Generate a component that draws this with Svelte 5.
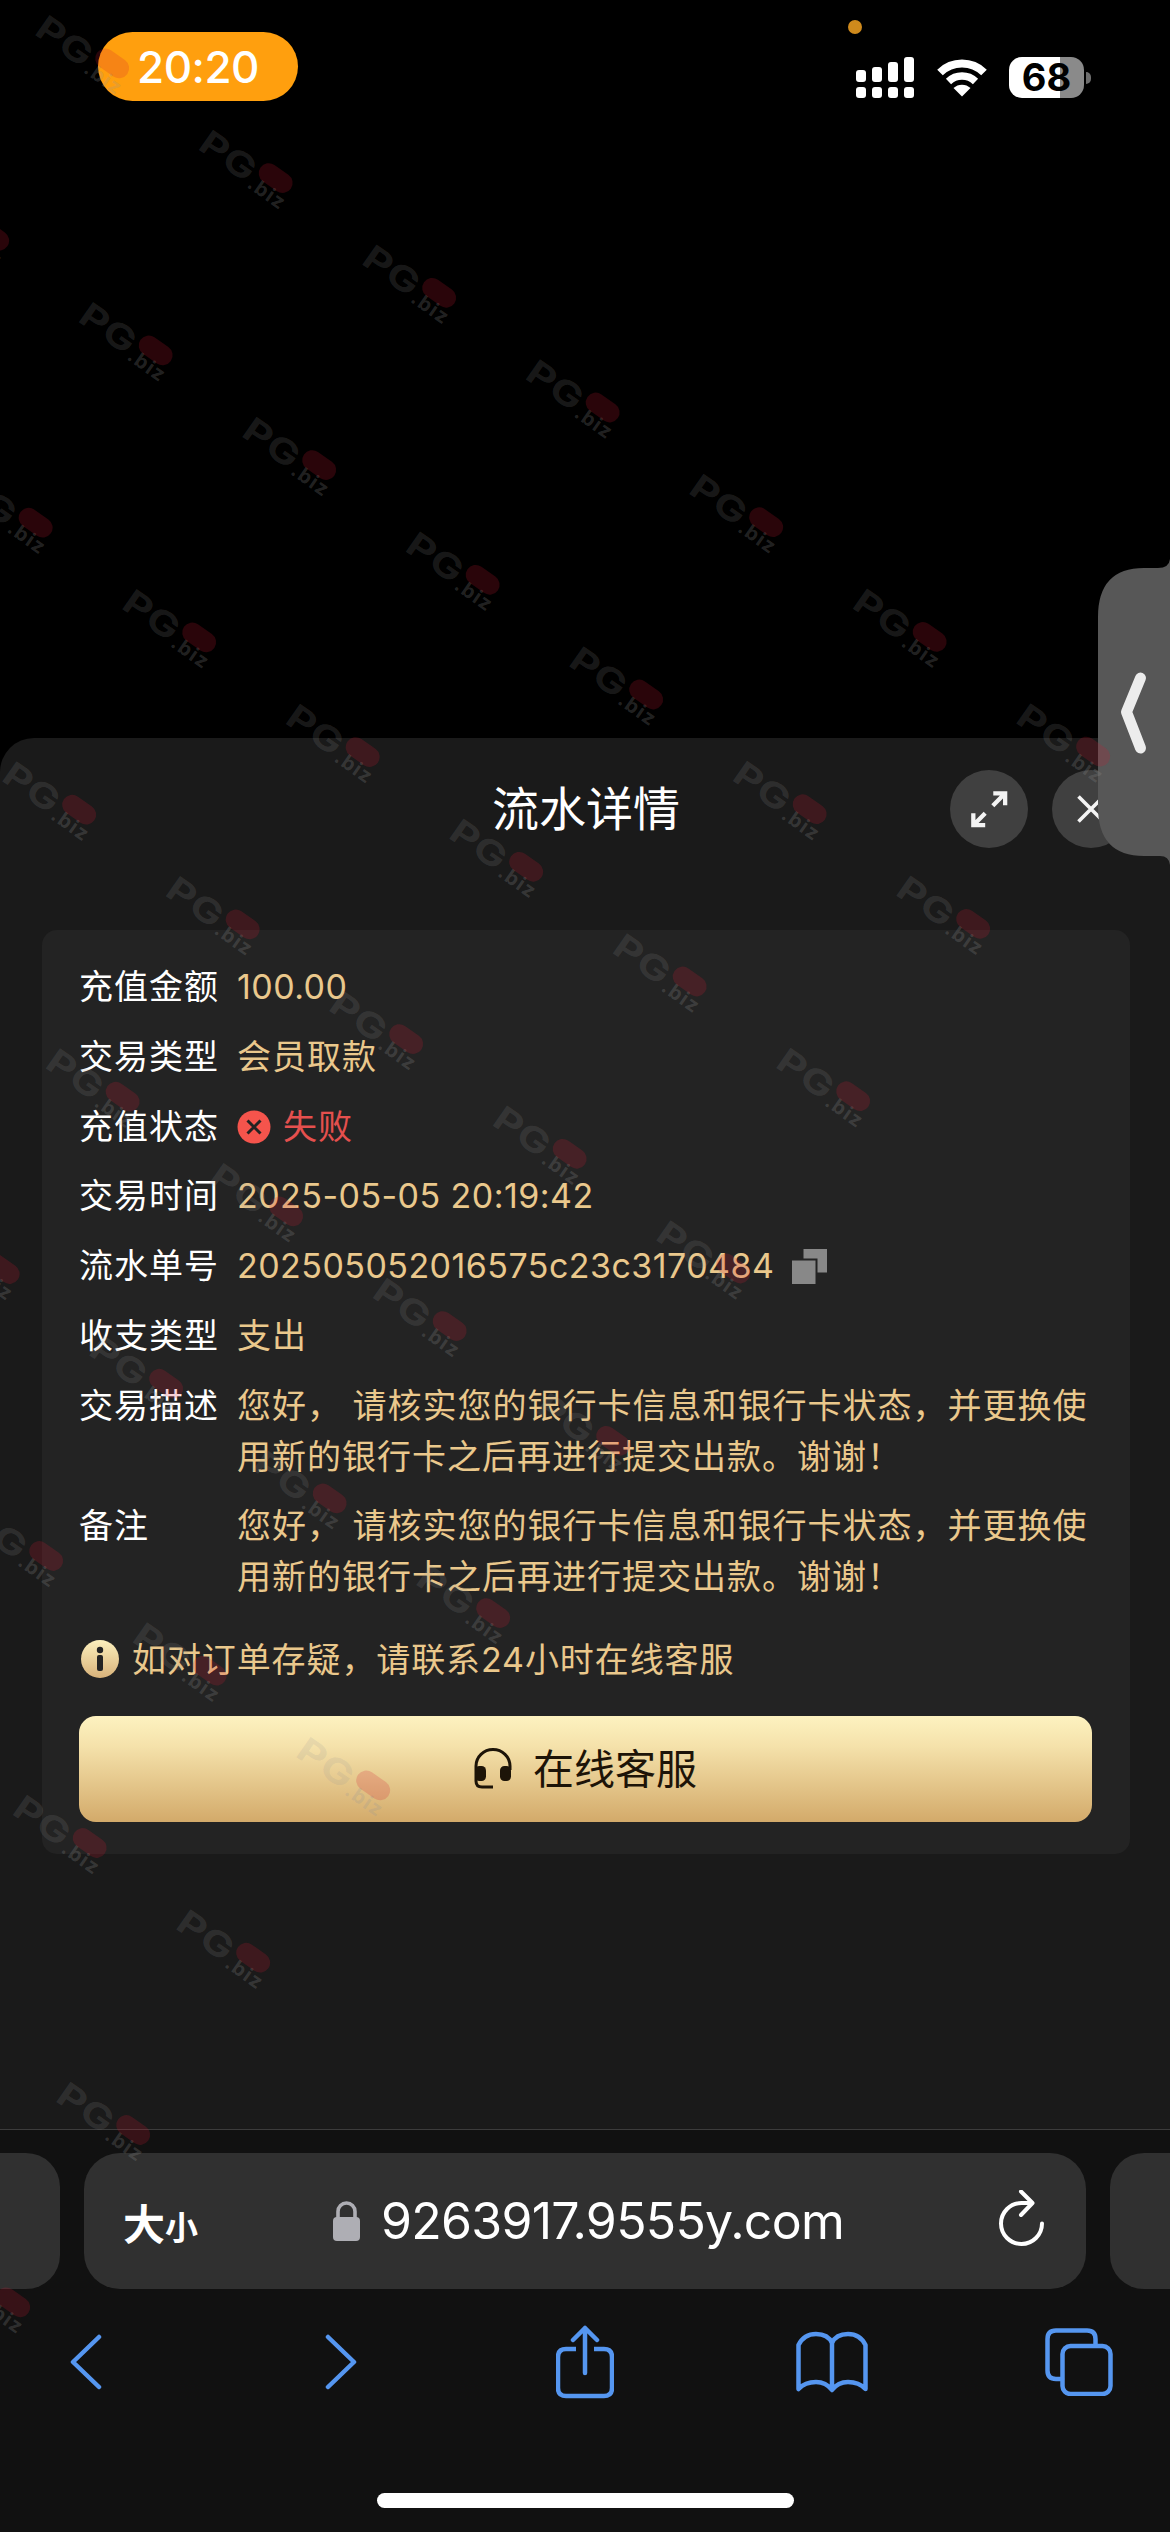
<script lang="ts">
  type Row = { label: string; value: string; kind?: string };

  const notice = '您好， 请核实您的银行卡信息和银行卡状态，并更换使用新的银行卡之后再进行提交出款。谢谢！';

  const rows: Array<Row> = [
    { label: '充值金额', value: '100.00', kind: 'number' },
    { label: '交易类型', value: '会员取款' },
    { label: '充值状态', value: '失败', kind: 'failed' },
    { label: '交易时间', value: '2025-05-05 20:19:42', kind: 'number' },
    { label: '流水单号', value: '202505052016575c23c3170484', kind: 'copy' },
    { label: '收支类型', value: '支出' },
    { label: '交易描述', value: notice },
    { label: '备注', value: notice },
  ];

  // first and last mark of every diagonal row
  const spans = [[0, 6], [-1, 5], [-1, 4], [-1, 3], [-1, 2], [-2, 1], [-2, 0], [-2, -1], [-2, -2], [-3, -3]];
  const marks: Array<{ x: number; y: number }> = [];
  spans.forEach(([from, to], i) => {
    for (let k = from; k <= to; k++) {
      marks.push({ x: 35 + i * 43.5 + k * 163.5, y: 15 + i * 287 + k * 114.7 });
    }
  });
</script>

<main class="phone">
  <header class="status-bar">
    <span class="time">20:20</span>
    <span class="mic-dot"></span>
    <div class="status-icons">
      <svg class="signal" width="58" height="41" viewBox="0 0 58 41" fill="#fff">
        <rect x="0" y="13" width="10" height="12" rx="3" />
        <rect x="16" y="10" width="10" height="15" rx="3" />
        <rect x="32" y="5" width="10" height="20" rx="3" />
        <rect x="48" y="0" width="10" height="25" rx="3" />
        <rect x="0" y="30" width="10" height="11" rx="3" />
        <rect x="16" y="30" width="10" height="11" rx="3" />
        <rect x="32" y="30" width="10" height="11" rx="3" />
        <rect x="48" y="30" width="10" height="11" rx="3" />
      </svg>
      <svg class="wifi" width="52" height="39" viewBox="0 0 52 39" fill="none" stroke="#fff">
        <path d="M4 14.5a31.500 31.500 0 0 1 44 0" stroke-width="8" />
        <path d="M12.500 23.500a19.500 19.500 0 0 1 27 0" stroke-width="7.500" />
        <path d="M17.500 30a12.500 12.500 0 0 1 17 0L26 38.500z" fill="#fff" stroke="none" />
      </svg>
      <div class="battery"><span>68</span></div>
      <span class="battery-cap"></span>
    </div>
  </header>

  <section class="sheet">
    <div class="sheet-head">
      <h1>流水详情</h1>
      <div class="actions">
        <button class="round" aria-label="全屏">
          <svg width="38" height="38" viewBox="0 0 40 40" fill="none" stroke="#f4f4f4" stroke-width="4.500">
            <path d="M24 16.500L37 3.500M24.500 3.500H37V16M16 24.500L3.500 37M3.500 24.500V37H16" />
          </svg>
        </button>
        <button class="round" aria-label="关闭">
          <svg width="28" height="28" viewBox="0 0 28 28" fill="none" stroke="#f4f4f4" stroke-width="3.600">
            <path d="M1.500 1.500l25 25M26.500 1.500l-25 25" />
          </svg>
        </button>
      </div>
    </div>

    <div class="card">
      <dl class="rows">
        {#each rows as row}
          <div class="row">
            <dt>{row.label}</dt>
            <dd class={row.kind}>
              {#if row.kind === 'failed'}
                <svg width="34" height="34" viewBox="0 0 34 34">
                  <circle cx="17" cy="17" r="16.500" fill="#f5544c" />
                  <path d="M10.500 10.500l13 13M23.500 10.500l-13 13" stroke="#232323" stroke-width="3" />
                </svg>
              {/if}
              <span>{row.value}</span>
              {#if row.kind === 'copy'}
                <svg width="35" height="35" viewBox="0 0 35 35" fill="#888">
                  <path d="M11.500 0H35v23.500H25.500V9.500H11.500z" />
                  <rect x="0" y="11.500" width="23.500" height="23.500" />
                </svg>
              {/if}
            </dd>
          </div>
        {/each}
      </dl>

      <p class="tip">
        <svg width="38" height="38" viewBox="0 0 38 38">
          <defs>
            <linearGradient id="gold" x1="0" y1="0" x2="0" y2="1">
              <stop offset="0" stop-color="#fcf0bd" />
              <stop offset="1" stop-color="#d8b27a" />
            </linearGradient>
          </defs>
          <circle cx="19" cy="19" r="19" fill="url(#gold)" />
          <circle cx="19" cy="10" r="3.200" fill="#232323" />
          <rect x="16" y="15" width="6" height="16" rx="2" fill="#232323" />
        </svg>
        <span>如对订单存疑，请联系24小时在线客服</span>
      </p>

      <button class="service">
        <svg width="38" height="41" viewBox="0 0 38 41" fill="none" stroke="#1d1408" stroke-width="3">
          <path d="M2 22v-4a17 16.500 0 0 1 34 0v4M2 20v13q0 6 6 6H19" />
          <rect x="1" y="18" width="11" height="15" rx="4.500" fill="#1d1408" stroke="none" />
          <rect x="26" y="18" width="11" height="15" rx="4.500" fill="#1d1408" stroke="none" />
        </svg>
        <span>在线客服</span>
      </button>
    </div>
  </section>

  <footer class="browser">
    <div class="tabs">
      <div class="neighbour left"></div>
      <div class="address">
        <span class="text-size">大<small>小</small></span>
        <div class="url">
          <svg width="27" height="40" viewBox="0 0 27 40">
            <path d="M5 18v-7.500a8.500 8.500 0 0 1 17 0V18" fill="none" stroke="#aeaeb4" stroke-width="3.600" />
            <rect x="0" y="16" width="27" height="24" rx="4" fill="#aeaeb4" />
          </svg>
          <span>9263917.9555y.com</span>
        </div>
        <svg class="reload" width="46" height="56" viewBox="0 0 46 56" fill="none" stroke="#fff" stroke-width="4" stroke-linecap="round" stroke-linejoin="round">
          <path d="M43 33.500A20.500 20.500 0 1 1 22.500 13H32" />
          <path d="M22 1.500L33.500 13L22 25" />
        </svg>
      </div>
      <div class="neighbour right"></div>
    </div>
    <nav class="toolbar">
      <svg width="32" height="56" viewBox="0 0 32 56">
        <path d="M29 3L3 28L29 53" />
      </svg>
      <svg width="32" height="56" viewBox="0 0 32 56">
        <path d="M3 3L29 28L3 53" />
      </svg>
      <svg width="58" height="74" viewBox="0 0 58 74">
        <path d="M20 24H10q-8 0-8 8V63q0 8 8 8H48q8 0 8-8V32q0-8-8-8H38" stroke-linecap="butt" />
        <path d="M29 48V3M17 15L29 3L41 15" />
      </svg>
      <svg width="72" height="62" viewBox="0 0 72 62">
        <path d="M36 59Q30 51 20 51Q9 51 2.500 58V14Q8 3 20 3Q32 3 36 12Q40 3 52 3Q64 3 69.500 14V58Q63 51 52 51Q42 51 36 59V12" />
      </svg>
      <svg width="68" height="68" viewBox="0 0 68 68">
        <rect x="17.500" y="18" width="48" height="48" rx="8" />
        <path d="M17 51H11q-8.500 0-8.500-8.500V11q0-8.500 8.500-8.500H42q8.500 0 8.500 8.500V17" />
      </svg>
    </nav>
    <div class="home"></div>
  </footer>

  <aside class="side-tab">
    <svg width="72" height="306" viewBox="0 0 72 306">
      <path d="M72 0Q71 9 60 9H46Q0 9 0 58V248Q0 297 46 297H62Q71 297 72 306z" fill="#575757" />
      <path d="M42.500 119L28.500 153L42.500 189" fill="none" stroke="#ececec" stroke-width="11" stroke-linecap="round" stroke-linejoin="round" />
    </svg>
  </aside>

  <svg class="watermark" width="1170" height="2532" viewBox="0 0 1170 2532" aria-hidden="true">
    {#each marks as mark}
      <g transform="translate({mark.x} {mark.y})">
        <g transform="translate(0 20) rotate(35)">
          <text class="logo" transform="scale(1.28 1)" x="-2" y="0">PG</text>
          <text class="biz" x="60" y="3">.biz</text>
          <rect x="61" y="-31" width="37" height="20" rx="10" fill="#d01830" fill-opacity=".2" />
        </g>
      </g>
    {/each}
  </svg>
</main>

<style>
  :global(body) {
    background: #000;
  }

  .phone {
    position: relative;
    display: flex;
    flex-direction: column;
    width: 1170px;
    height: 2532px;
    overflow: hidden;
    background: #000;
    color: #fff;
    font-family: Inter, 'Noto Sans CJK SC', sans-serif;
  }

  h1, dl, dd, p {
    margin: 0;
  }

  svg {
    display: block;
    flex: none;
  }

  button {
    border: 0;
    padding: 0;
    font-family: inherit;
  }

  .status-bar {
    display: flex;
    justify-content: space-between;
    align-items: flex-start;
    box-sizing: border-box;
    height: 738px;
    padding: 32px 79px 0 98px;
  }

  .time {
    width: 200px;
    height: 69px;
    border-radius: 35px;
    background: #ff9f0e;
    text-align: center;
    font-size: 44px;
    font-weight: 500;
    letter-spacing: -0.5px;
    line-height: 70px;
  }

  .mic-dot {
    position: absolute;
    left: 848px;
    top: 20px;
    width: 14px;
    height: 14px;
    border-radius: 50%;
    background: #cf8a1c;
  }

  .status-icons {
    display: flex;
    align-items: center;
    padding-top: 25px;
  }

  .wifi {
    margin: 0 21px 0 22px;
  }

  .battery {
    width: 75px;
    height: 41px;
    border-radius: 13px;
    background: linear-gradient(90deg, #fff 51px, #8a8a8a 51px);
    color: #000;
    text-align: center;
    font-size: 38px;
    font-weight: 700;
    line-height: 41px;
  }

  .battery-cap {
    width: 5px;
    height: 12px;
    margin-left: 2px;
    border-radius: 0 6px 6px 0;
    background: #6e6e6e;
  }

  .sheet {
    box-sizing: border-box;
    height: 1391px;
    padding: 32px 40px 0 42px;
    border-radius: 34px 34px 0 0;
    background: #1a1a1a;
  }

  .sheet-head {
    display: grid;
    grid-template-columns: 1fr auto 1fr;
    align-items: center;
    height: 78px;
    margin-bottom: 82px;
  }

  .sheet-head h1 {
    grid-column: 2;
    font-size: 47px;
    font-weight: 400;
    line-height: 78px;
  }

  .actions {
    display: flex;
    justify-content: flex-end;
    gap: 24px;
  }

  .round {
    display: flex;
    align-items: center;
    justify-content: center;
    width: 78px;
    height: 78px;
    border-radius: 50%;
    background: #404040;
  }

  .card {
    box-sizing: border-box;
    height: 924px;
    padding: 32px 38px 0 37px;
    border-radius: 15px;
    background: #232323;
  }

  .rows {
    display: flex;
    flex-direction: column;
    gap: 19px;
    font-size: 34px;
    letter-spacing: 1px;
    line-height: 50.800px;
  }

  .row {
    display: flex;
  }

  dt {
    width: 158px;
    flex: none;
  }

  dd {
    display: flex;
    align-items: center;
    color: #eac88c;
  }

  .number,
  .copy {
    letter-spacing: 0.450px;
  }

  .copy {
    gap: 18px;
  }

  .failed {
    gap: 12px;
    color: #e5504e;
  }

  .tip {
    display: flex;
    align-items: center;
    gap: 13px;
    margin-top: 31px;
    padding-left: 2px;
    color: #eac88c;
    font-size: 34px;
    letter-spacing: 0.900px;
    line-height: 51px;
  }

  .service {
    display: flex;
    align-items: center;
    justify-content: center;
    gap: 21px;
    box-sizing: border-box;
    width: 100%;
    height: 106px;
    margin-top: 31px;
    padding-bottom: 5px;
    border-radius: 17px;
    background: linear-gradient(#fdf2c0, #f5e2ab 28%, #d3aa6a);
    color: #1d1408;
    font-size: 41px;
  }

  .service svg {
    margin-top: 5px;
  }

  .browser {
    display: flex;
    flex: 1;
    flex-direction: column;
    align-items: center;
    border-top: 1px solid #3c3c3c;
    background: #111;
  }

  .tabs {
    display: flex;
    align-self: stretch;
    gap: 24px;
    margin-top: 23px;
    height: 136px;
  }

  .neighbour {
    width: 60px;
    background: #303030;
  }

  .left {
    border-radius: 0 34px 34px 0;
  }

  .right {
    border-radius: 34px 0 0 34px;
  }

  .address {
    display: flex;
    flex: 1;
    align-items: center;
    justify-content: space-between;
    padding: 0 41px 0 39px;
    border-radius: 36px;
    background: #303030;
  }

  .text-size {
    font-size: 42px;
    font-weight: 700;
  }

  .text-size small {
    font-size: 33px;
  }

  .url {
    display: flex;
    align-items: center;
    gap: 21px;
    margin-right: 20px;
    font-size: 50px;
    letter-spacing: -0.750px;
  }

  .reload {
    margin-bottom: 6px;
  }

  .toolbar {
    display: grid;
    grid-template-columns: 255px 231px 240px 249px 68px;
    align-self: stretch;
    align-items: center;
    height: 74px;
    margin-top: 36px;
    padding-left: 70px;
  }

  .toolbar svg {
    fill: none;
    stroke: #5596f0;
    stroke-width: 4.500;
    stroke-linecap: round;
    stroke-linejoin: round;
  }

  .home {
    width: 417px;
    height: 15px;
    margin-top: 94px;
    border-radius: 8px;
    background: #fff;
  }

  .side-tab {
    position: absolute;
    right: 0;
    top: 559px;
  }

  .watermark {
    position: absolute;
    left: 0;
    top: 0;
    pointer-events: none;
  }

  .logo {
    fill: rgba(150, 150, 150, 0.18);
    font-size: 34px;
    font-weight: 700;
  }

  .biz {
    fill: rgba(150, 150, 150, 0.24);
    font-size: 20px;
    font-weight: 700;
    letter-spacing: 1.500px;
  }
</style>
